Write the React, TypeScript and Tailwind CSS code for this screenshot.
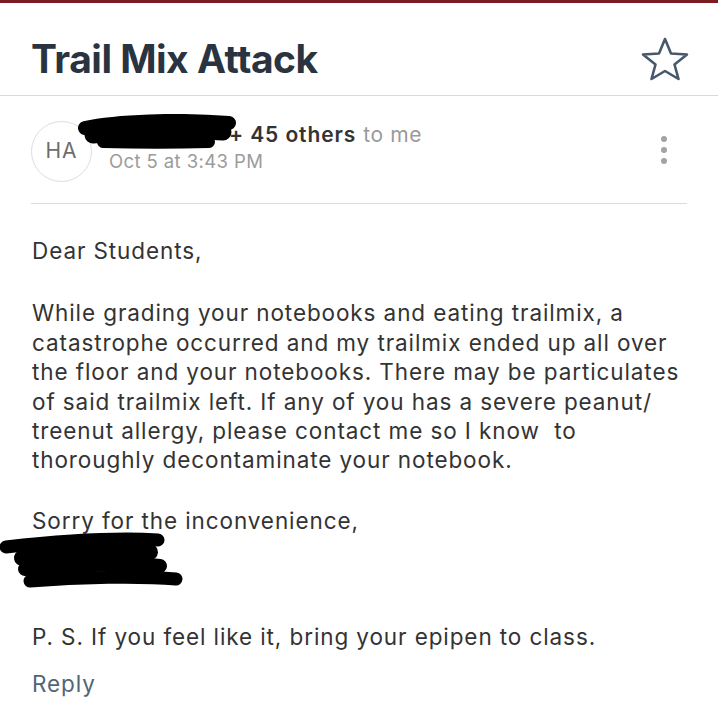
import React from 'react'

const font = { fontFamily: 'Inter, "Noto Sans", sans-serif' }

function Star() {
  return (
    <svg width="50" height="46" viewBox="0 0 50 46" fill="none">
      <path
        d="M25 3 L31 17.5 L47 18.5 L34.5 28.5 L38.5 43 L25 35 L11.5 43 L15.5 28.5 L3 18.5 L19 17.5 Z"
        stroke="#46586a"
        strokeWidth="2.6"
        strokeLinejoin="round"
      />
    </svg>
  )
}

// scribbled-out sender name
function SenderScribble() {
  return (
    <svg width="160" height="38" viewBox="0 0 160 38" className="shrink-0 -ml-[10px] -mr-[8px] -mt-[4px]">
      <g stroke="#000" strokeLinecap="round" fill="none">
        <path d="M8 14 C40 7 100 5 152 9" strokeWidth="14" />
        <path d="M16 21 C60 17 110 16 146 18" strokeWidth="17" />
        <path d="M26 28 C60 29 100 29 132 28" strokeWidth="12" />
      </g>
    </svg>
  )
}

function SignatureScribble() {
  return (
    <svg width="190" height="64" viewBox="0 0 190 64" className="block -ml-[32px] -mt-[4px] -mb-[2px]">
      <g stroke="#000" strokeLinecap="round" fill="none">
        <path d="M6 16 C60 10 110 6 158 9" strokeWidth="13" />
        <path d="M22 27 C70 21 120 19 150 21" strokeWidth="16" />
        <path d="M25 38 C80 34 130 32 160 35" strokeWidth="14" />
        <path d="M30 50 C80 46 140 45 176 48" strokeWidth="13" />
      </g>
    </svg>
  )
}

export default function App() {
  const body = [
    'While grading your notebooks and eating trailmix, a',
    'catastrophe occurred and my trailmix ended up all over',
    'the floor and your notebooks. There may be particulates',
    'of said trailmix left. If any of you has a severe peanut/',
    'treenut allergy, please contact me so I know\u00a0 to',
    'thoroughly decontaminate your notebook.',
  ]

  return (
    <div className="w-[718px] h-[724px] bg-white overflow-hidden" style={font}>
      <div className="h-[3px] bg-[#7b1c22]" />

      {/* subject */}
      <div className="h-[93px] flex items-center justify-between pt-[20px] pl-[31px] pr-[28px] border-b border-[#d9d9d9]">
        <h1 className="text-[39px] font-bold tracking-[-0.5px] text-[#2a3441]">Trail Mix Attack</h1>
        <Star />
      </div>

      {/* sender */}
      <div className="mx-[31px] h-[108px] flex items-center border-b border-[#dcdcdc]">
        <div className="w-[61px] h-[61px] rounded-full border border-[#dedede] flex items-center justify-center text-[21px] tracking-[1px] text-[#6d6d6d] shrink-0 mt-[3px]">
          HA
        </div>
        <div className="flex-1 -ml-[5px] -mt-[4px]">
          <div className="flex items-center h-[30px]">
            <SenderScribble />
            <span className="text-[21px] font-semibold tracking-[0.9px] text-[#333]">+ 45 others</span>
            <span className="text-[21px] tracking-[0.6px] text-[#9a9a9a] ml-[7px]">to me</span>
          </div>
          <div className="text-[18.5px] tracking-[0.4px] text-[#9b9b9b] ml-[22px] -mt-[2px]">Oct 5 at 3:43 PM</div>
        </div>
        <div className="flex flex-col gap-[5px] mr-[20px]">
          <span className="w-[6px] h-[6px] rounded-full bg-[#a3a3a3]" />
          <span className="w-[6px] h-[6px] rounded-full bg-[#a3a3a3]" />
          <span className="w-[6px] h-[6px] rounded-full bg-[#a3a3a3]" />
        </div>
      </div>

      {/* message */}
      <div className="px-[32px] pt-[32px] text-[22.5px] leading-[29.4px] tracking-[0.9px] text-[#333]">
        <p>Dear Students,</p>
        <div className="mt-[33px]">
          {body.map(l => (
            <p key={l} className="whitespace-pre">{l}</p>
          ))}
        </div>
        <p className="mt-[31px]">Sorry for the inconvenience,</p>
        <SignatureScribble />
        <p className="mt-[29px]">P. S. If you feel like it, bring your epipen to class.</p>
        <p className="mt-[17px] text-[#506677]">Reply</p>
      </div>
    </div>
  )
}
